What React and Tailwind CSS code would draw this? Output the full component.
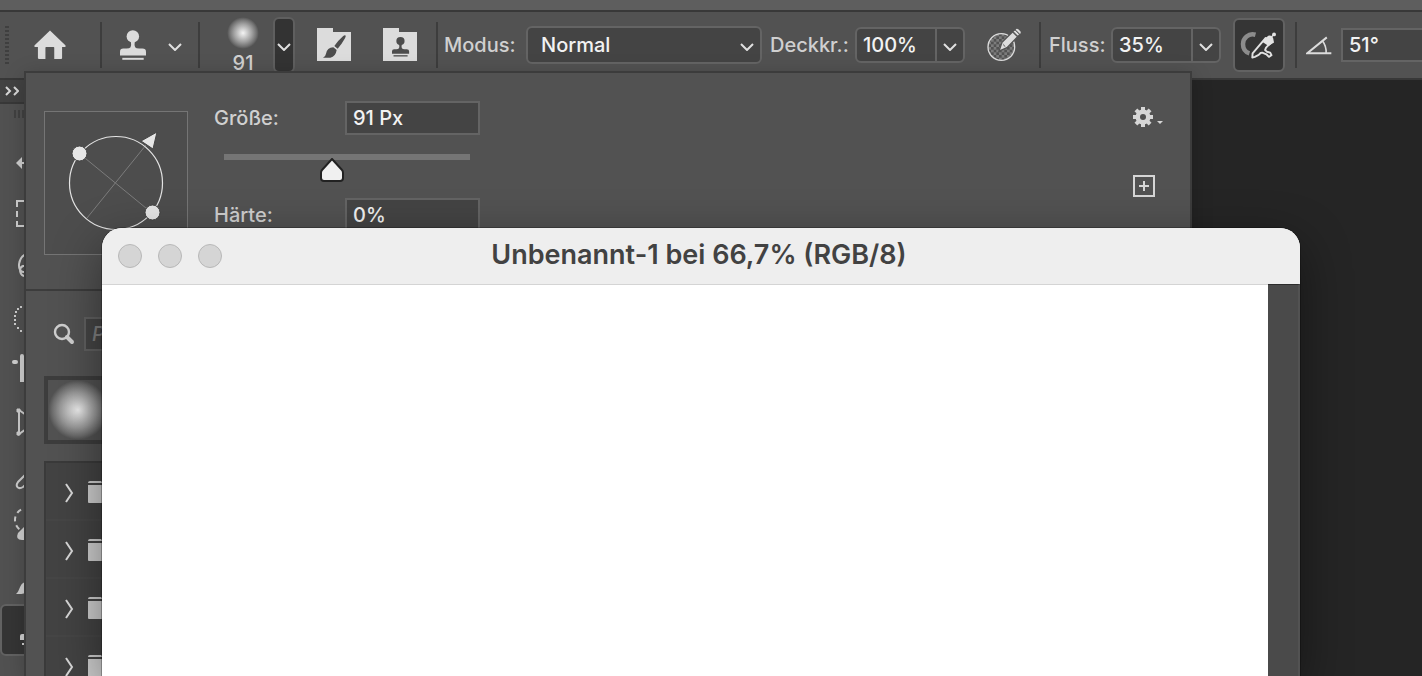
import React, { useState } from "react";

function Chevron({ className = "" }) {
  return (
    <svg viewBox="0 0 14 8" className={`h-2 w-3.5 shrink-0 ${className}`} fill="none" stroke="#e0e0e0" strokeWidth="2" aria-hidden="true">
      <path d="M1 1L7 7L13 1" />
    </svg>
  );
}

function Separator() {
  return <div className="h-[46px] w-0.5 shrink-0 bg-[#3d3d3d]" />;
}

function HomeIcon() {
  return (
    <svg viewBox="101 89 98 91" className="h-[30px] w-8" fill="#dcdcdc" aria-hidden="true">
      <path d="M150 90L197 135Q200 141 193 141H187V174Q187 177 184 177H163V143Q163 141 161 141H138Q136 141 136 143V177H117Q113 177 113 174V141H107Q100 141 103 135Z" />
    </svg>
  );
}

function StampShape() {
  return (
    <>
      <circle cx="39" cy="19" r="19" />
      <path d="M33 33H45Q43 46 46 52Q49 56 58 56H68Q79 56 79 66V77H0V66Q0 56 10 56H20Q29 56 32 52Q35 46 33 33Z" />
      <rect x="7" y="84" width="65" height="6" />
    </>
  );
}

function StampIcon() {
  return (
    <svg viewBox="0 0 79 90" className="h-[30px] w-[26px]" fill="#dcdcdc" aria-hidden="true">
      <StampShape />
    </svg>
  );
}

function FolderIcon({ children }) {
  return (
    <svg viewBox="0 0 102 102" className="size-[34px]" aria-hidden="true">
      <path d="M0 0H48V12H102V99H0Z" fill="#dcdcdc" />
      <g fill="#4c4c4c">{children}</g>
    </svg>
  );
}

function OpacityIcon() {
  return (
    <svg viewBox="860 87 102 102" className="size-[34px]" aria-hidden="true">
      <defs>
        <pattern id="checks" width="16" height="16" patternUnits="userSpaceOnUse">
          <rect width="16" height="16" fill="#525252" />
          <rect width="8" height="8" fill="#7c7c7c" />
          <rect x="8" y="8" width="8" height="8" fill="#7c7c7c" />
        </pattern>
      </defs>
      <circle cx="903" cy="144" r="40" fill="url(#checks)" stroke="#dcdcdc" strokeWidth="4" />
      <path d="M896 156L905 130L937 98L952 113L920 146Z" fill="#dcdcdc" stroke="#525252" strokeWidth="4" />
      <path d="M939 98L944 93L957 106L952 111Z" fill="#dcdcdc" stroke="#525252" strokeWidth="2" />
      <path d="M946 92Q949 87 954 91L960 97Q963 101 959 105Z" fill="#dcdcdc" />
      <path d="M907 133L916 143L911 142Z" fill="#525252" />
    </svg>
  );
}

function AirbrushIcon() {
  return (
    <svg viewBox="612 60 150 150" className="size-[50px]" fill="none" aria-hidden="true">
      <path d="M676 103C654 97 637 113 637 132C637 146 644 157 657 161" stroke="#8c8c8c" strokeWidth="14" />
      <path
        d="M666 174L667 161L708 113L724 128L709 143L706 151L712 156L722 159L726 167L718 172L710 164L697 159L692 160L686 166L674 172Z"
        stroke="#e2e2e2" strokeWidth="6" strokeLinejoin="round"
      />
      <path d="M704 116L716 106Q728 104 731 113L734 127L717 138L698 126Z" fill="#e2e2e2" />
      <path d="M726 110L734 101" stroke="#e2e2e2" strokeWidth="4" />
      <circle cx="734" cy="102" r="6" fill="#e2e2e2" />
    </svg>
  );
}

function AngleIcon() {
  return (
    <svg viewBox="828 104 80 56" className="h-[19px] w-[26px]" fill="none" stroke="#dcdcdc" strokeWidth="6" aria-hidden="true">
      <path d="M892 107L832 156H906" />
      <path d="M879 118Q891 134 890 156" strokeWidth="5" />
    </svg>
  );
}

function NumberField({ id, value, label }) {
  return (
    <div className="flex h-9 w-[110px] shrink-0 rounded-md border-2 border-[#646464] bg-[#444444]">
      <input id={id} defaultValue={value} className="w-0 min-w-0 grow bg-transparent pl-1.5 font-medium text-[#f2f2f2] outline-none" />
      <button aria-label={label} className="flex w-7 items-center justify-center border-l-2 border-[#646464] pt-1">
        <Chevron />
      </button>
    </div>
  );
}

function OptionsBar() {
  return (
    <header className="flex h-[68px] shrink-0 items-center overflow-hidden border-b-2 border-[#383838] bg-[#525252] font-medium text-[#d0d0d0]">
      <div className="ml-[5px] h-[38px] w-1 shrink-0 bg-[repeating-linear-gradient(#3f3f3f_0_2px,#525252_2px_4px)]" />
      <button aria-label="Startbildschirm" className="ml-[25px] shrink-0"><HomeIcon /></button>
      <div className="ml-[34px] flex shrink-0 items-center">
        <Separator />
        <button aria-label="Kopierstempel" className="ml-[18px]"><StampIcon /></button>
        <button aria-label="Werkzeugvorgaben" className="ml-[22px] pt-1"><Chevron /></button>
      </div>
      <div className="ml-4 flex shrink-0 items-center">
        <Separator />
        <div className="ml-[27px] flex w-8 flex-col items-center gap-0.5 pt-0.5">
          <div className="size-8 rounded-full bg-[radial-gradient(circle,#f4f4f4_0%,#cfcfcf_18%,#a0a0a0_40%,#707070_60%,#525252_70%)]" />
          <span className="leading-6">91</span>
        </div>
        <button aria-label="Pinselvorgaben" className="ml-3.5 flex h-14 w-[22px] items-center justify-center rounded-md border-2 border-[#5f5f5f] bg-[#333333] pt-1">
          <Chevron />
        </button>
      </div>
      <button aria-label="Pinseleinstellungen" className="ml-[22px] shrink-0">
        <FolderIcon>
          <path d="M85 22Q88 24 84 31Q74 49 62 62L52 54Q63 38 78 25Q82 21 85 22Z" />
          <path d="M49 58L59 66Q56 86 40 89H18Q26 85 27 77Q30 59 49 58Z" />
        </FolderIcon>
      </button>
      <button aria-label="Kopierquelle" className="ml-8 shrink-0">
        <FolderIcon>
          <g transform="translate(27 27) scale(0.65)"><StampShape /></g>
        </FolderIcon>
      </button>
      <div className="ml-[19px] flex shrink-0 items-center">
        <Separator />
        <label htmlFor="mode" className="ml-1.5 w-[82px]">Modus:</label>
        <div className="relative w-[236px]">
          <select id="mode" className="h-[38px] w-full appearance-none rounded-md border-2 border-[#646464] bg-[#444444] pl-[13px] font-medium text-[#f2f2f2]">
            <option>Normal</option>
          </select>
          <Chevron className="pointer-events-none absolute top-[17px] right-2" />
        </div>
      </div>
      <label htmlFor="opacity" className="ml-2 w-[85px] shrink-0">Deckkr.:</label>
      <NumberField id="opacity" value="100%" label="Deckkraft wählen" />
      <button aria-label="Druck für Deckkraft" className="ml-[22px] shrink-0"><OpacityIcon /></button>
      <div className="ml-[18px] flex shrink-0 items-center">
        <Separator />
        <label htmlFor="flow" className="ml-2 w-[62px]">Fluss:</label>
        <NumberField id="flow" value="35%" label="Fluss wählen" />
      </div>
      <button aria-label="Airbrush" className="ml-3 flex h-[54px] w-[52px] shrink-0 items-center justify-center rounded-md border-2 border-[#626262] bg-[#353535]">
        <AirbrushIcon />
      </button>
      <div className="ml-2.5 flex shrink-0 items-center">
        <Separator />
        <label htmlFor="angle" className="ml-[9px] w-[35px]"><AngleIcon /></label>
      </div>
      <input id="angle" aria-label="Winkel" defaultValue="51°" className="h-[34px] w-[110px] shrink-0 border-2 border-[#646464] bg-[#444444] pl-1.5 font-medium text-[#f2f2f2]" />
    </header>
  );
}

const tools = [
  { name: "Verschieben", art: <><path d="M16 27L22 21V33Z" fill="#cfcfcf" stroke="none" /><path d="M21 27H42M30 15V39" /></> },
  { name: "Auswahlrechteck", art: <path d="M24 13H17V19M17 23V29M17 33V38H24M28 13H36V19M28 38H36V30" /> },
  { name: "Lasso", art: <path d="M28 13C17 17 17 31 23 32C28 32 28 25 23 26C18 28 20 36 25 36M28 13C42 14 42 30 28 32" /> },
  { name: "Objektauswahl", art: <path d="M20 15h2M17 17h2M15 20h2M14 24h2M14 28h2M14 32h2M17 36h2M20 39h2" /> },
  { name: "Freistellen", art: <><path d="M14 18H16" strokeWidth="4" strokeLinecap="round" /><path d="M22 12V36H40" strokeWidth="4" strokeLinecap="round" /></> },
  { name: "Rahmen", art: <><path d="M19 14V38L36 26L19 14" /><path d="M17 13H20V16H17ZM17 36H20V39H17Z" fill="#cfcfcf" strokeWidth="1" /></> },
  { name: "Pipette", art: <path d="M28 24L18 34C15 38 18 42 23 39L34 29" /> },
  { name: "Reparaturpinsel", art: <><circle cx="27" cy="20" r="12" strokeDasharray="5 4" /><path d="M26 25L18 33Q15 40 22 40H28Z" fill="#cfcfcf" stroke="none" /></> },
  { name: "Pinsel", art: <path d="M16 42C20 39 19 32 25 30L30 34C29 42 24 42 16 42Z" fill="#cfcfcf" stroke="none" /> },
  { name: "Kopierstempel", active: true, art: <><path d="M28 18V30H22Q20 30 20 32V36H40V30H31V18Z" fill="#cfcfcf" stroke="none" /><path d="M22 40H40" /></> },
  { name: "Protokollpinsel", art: <path d="M16 25L20 21L24 24L29 19V34H22Z" fill="#cfcfcf" stroke="none" /> },
];

function ToolRail() {
  return (
    <nav className="w-[52px] shrink-0 overflow-hidden bg-[#515151]">
      <button aria-label="Werkzeugleiste erweitern" className="flex h-6 w-full items-center border-b-2 border-[#383838] bg-[#424242] pl-[5px]">
        <svg viewBox="0 0 14 10" className="h-2.5 w-3.5" fill="none" stroke="#d8d8d8" strokeWidth="2" aria-hidden="true">
          <path d="M1 1L5 5L1 9M9 1L13 5L9 9" />
        </svg>
      </button>
      <div className="mt-1.5 mb-[18px] ml-3.5 h-2 w-6 bg-[repeating-linear-gradient(90deg,#414141_0_2px,#515151_2px_4px)]" />
      {tools.map((tool) => (
        <button key={tool.name} aria-label={tool.name} className={tool.active ? "block h-[52px] w-full rounded-md border-2 border-[#626262] bg-[#353535]" : "block h-[52px] w-full"}>
          <svg viewBox="0 0 52 52" className={tool.active ? "-m-0.5 size-[52px]" : "size-[52px]"} fill="none" stroke="#cfcfcf" strokeWidth="2" aria-hidden="true">
            {tool.art}
          </svg>
        </button>
      ))}
    </nav>
  );
}

function BrushShape() {
  return (
    <svg viewBox="0 0 144 144" className="size-36 shrink-0" fill="none" role="img" aria-label="Pinselwinkel und Rundheit">
      <rect x="0.5" y="0.5" width="143" height="143" fill="#4d4d4d" stroke="#757575" />
      <path d="M36 43L108 102M102 34L43 107" stroke="#7c7c7c" />
      <circle cx="72" cy="72" r="46.5" stroke="#e4e4e4" strokeWidth="1.2" />
      <circle cx="35.500" cy="42.500" r="7.500" fill="#e6e6e6" stroke="#444" />
      <circle cx="108.500" cy="101.500" r="7.500" fill="#e6e6e6" stroke="#444" />
      <path d="M97 30L113 21L109 38Z" fill="#e6e6e6" stroke="#444" />
    </svg>
  );
}

function SizeSlider() {
  const [value, setValue] = useState(44);
  return (
    <div className="relative mt-[19px] ml-2.5 h-7 w-[246px]">
      <div className="h-1.5 w-full bg-[#757575]" />
      <svg viewBox="0 0 24 24" className="absolute top-1 size-6 -translate-x-1/2" style={{ left: `${value}%` }} aria-hidden="true">
        <path d="M12 1L22 12Q23 13 23 15V20Q23 23 20 23H4Q1 23 1 20V15Q1 13 2 12Z" fill="#f0f0f0" stroke="#222" strokeWidth="2" />
      </svg>
      <input type="range" aria-label="Größe" min="0" max="100" value={value} onChange={(e) => setValue(Number(e.target.value))} className="absolute inset-0 w-full opacity-0" />
    </div>
  );
}

function PanelField({ id, label, value }) {
  return (
    <div className="flex items-center font-medium">
      <label htmlFor={id} className="w-[131px]">{label}</label>
      <input id={id} defaultValue={value} className="h-[34px] w-[135px] border-2 border-[#646464] bg-[#444444] pl-1.5 text-[#f2f2f2]" />
    </div>
  );
}

function GearIcon() {
  return (
    <svg viewBox="-10 -10 20 20" className="size-5" aria-hidden="true">
      <g fill="#d6d6d6">
        {[0, 45, 90, 135].map((angle) => (
          <rect key={angle} x="-2" y="-10" width="4" height="20" transform={`rotate(${angle})`} />
        ))}
        <circle r="7.500" />
      </g>
      <circle r="3" fill="#4f4f4f" />
    </svg>
  );
}

function BrushPanel() {
  return (
    <section className="absolute top-[71px] right-[230px] bottom-0 left-6 overflow-hidden border-2 border-b-0 border-[#3c3c3c] bg-[#525252] text-[#d0d0d0] shadow-[0_4px_20px_rgba(0,0,0,0.2)]">
      <div className="flex h-[218px] border-b-2 border-[#3c3c3c] pl-[18px]">
        <div className="pt-[38px]"><BrushShape /></div>
        <div className="ml-[26px] grow pt-7">
          <PanelField id="size" label="Größe:" value="91 Px" />
          <SizeSlider />
          <div className="mt-4"><PanelField id="hardness" label="Härte:" value="0%" /></div>
        </div>
        <div className="flex w-[57px] flex-col items-start gap-12 pt-[34px]">
          <button aria-label="Optionen" className="flex items-end gap-1">
            <GearIcon />
            <svg viewBox="0 0 6 6" className="size-1.5" aria-hidden="true"><path d="M0 0H6L3 3Z" fill="#d6d6d6" /></svg>
          </button>
          <button aria-label="Neue Vorgabe" className="flex size-[22px] items-center justify-center border-2 border-[#d6d6d6]">
            <svg viewBox="0 0 10 10" className="size-2.5" stroke="#d6d6d6" strokeWidth="2" aria-hidden="true"><path d="M5 0V10M0 5H10" /></svg>
          </button>
        </div>
      </div>
      <div className="pt-[26px] pl-[18px]">
        <div className="flex items-center pl-[9px]">
          <svg viewBox="0 0 22 22" className="size-[22px]" fill="none" stroke="#d0d0d0" aria-hidden="true">
            <circle cx="9" cy="9" r="7" strokeWidth="2.400" />
            <path d="M14 14L19 19" strokeWidth="4" strokeLinecap="round" />
          </svg>
          <input aria-label="Pinsel suchen" placeholder="Pinsel suchen" className="ml-[9px] h-[34px] w-80 border-2 border-[#616161] bg-[#454545] pl-1.5 font-medium italic placeholder:text-[#808080]" />
        </div>
        <div className="mt-[25px] flex size-[68px] items-center justify-center border-4 border-[#3d3d3d] bg-[#525252]">
          <div className="size-[60px] rounded-full bg-[radial-gradient(circle,#f0f0f0_0%,#cccccc_18%,#9a9a9a_42%,#6c6c6c_61%,#525252_70%)]" />
        </div>
        <ul className="mt-[17px] mr-[18px] border-2 border-[#3a3a3a] bg-[#434343]">
          {["a", "b", "c", "d"].map((key) => (
            <li key={key} className="flex h-[58px] items-center gap-3.5 border-b-2 border-[#464646] pt-1 pl-[18px]">
              <svg viewBox="0 0 10 20" className="h-5 w-2.5" fill="none" stroke="#d8d8d8" strokeWidth="2" aria-hidden="true"><path d="M2 1L8 10L2 19" /></svg>
              <svg viewBox="0 0 28 24" className="h-6 w-7" fill="#cfcfcf" aria-hidden="true">
                <path d="M0 2Q0 0 2 0H13L15 2H0Z" />
                <path d="M0 4H28V22H1Q0 22 0 21Z" />
              </svg>
            </li>
          ))}
        </ul>
      </div>
    </section>
  );
}

function DocumentWindow() {
  return (
    <main className="absolute top-[228px] right-[122px] bottom-0 left-[102px] flex flex-col overflow-hidden rounded-t-[20px] bg-white shadow-[0_0_0_1px_rgba(0,0,0,0.25),0_16px_50px_rgba(0,0,0,0.45)]">
      <div className="flex h-[57px] shrink-0 items-center border-b border-[#d4d4d4] bg-[#eeeeee] px-4">
        <div className="flex w-[104px] gap-4">
          {["Schließen", "Minimieren", "Maximieren"].map((name) => (
            <button key={name} aria-label={name} className="size-6 rounded-full border border-[#b8b8b8] bg-[#d5d5d5]" />
          ))}
        </div>
        <h1 className="grow pr-[108px] pb-0.5 text-center text-[27px] leading-8 font-semibold text-[#424242]">Unbenannt-1 bei 66,7% (RGB/8)</h1>
      </div>
      <div className="-mt-px flex grow">
        <div className="mt-px grow bg-white" />
        <div className="w-8 border-t border-r-2 border-t-[#2c2c2c] border-r-[#525252] bg-[#4a4a4a]" />
      </div>
    </main>
  );
}

export default function App() {
  return (
    <div className="relative flex h-screen flex-col overflow-hidden bg-[#252525] font-['Inter',sans-serif] text-xl">
      <div className="h-3 shrink-0 border-b-2 border-[#383838] bg-[#5e5e5e]" />
      <OptionsBar />
      <div className="flex min-h-0 grow">
        <ToolRail />
      </div>
      <BrushPanel />
      <DocumentWindow />
    </div>
  );
}
